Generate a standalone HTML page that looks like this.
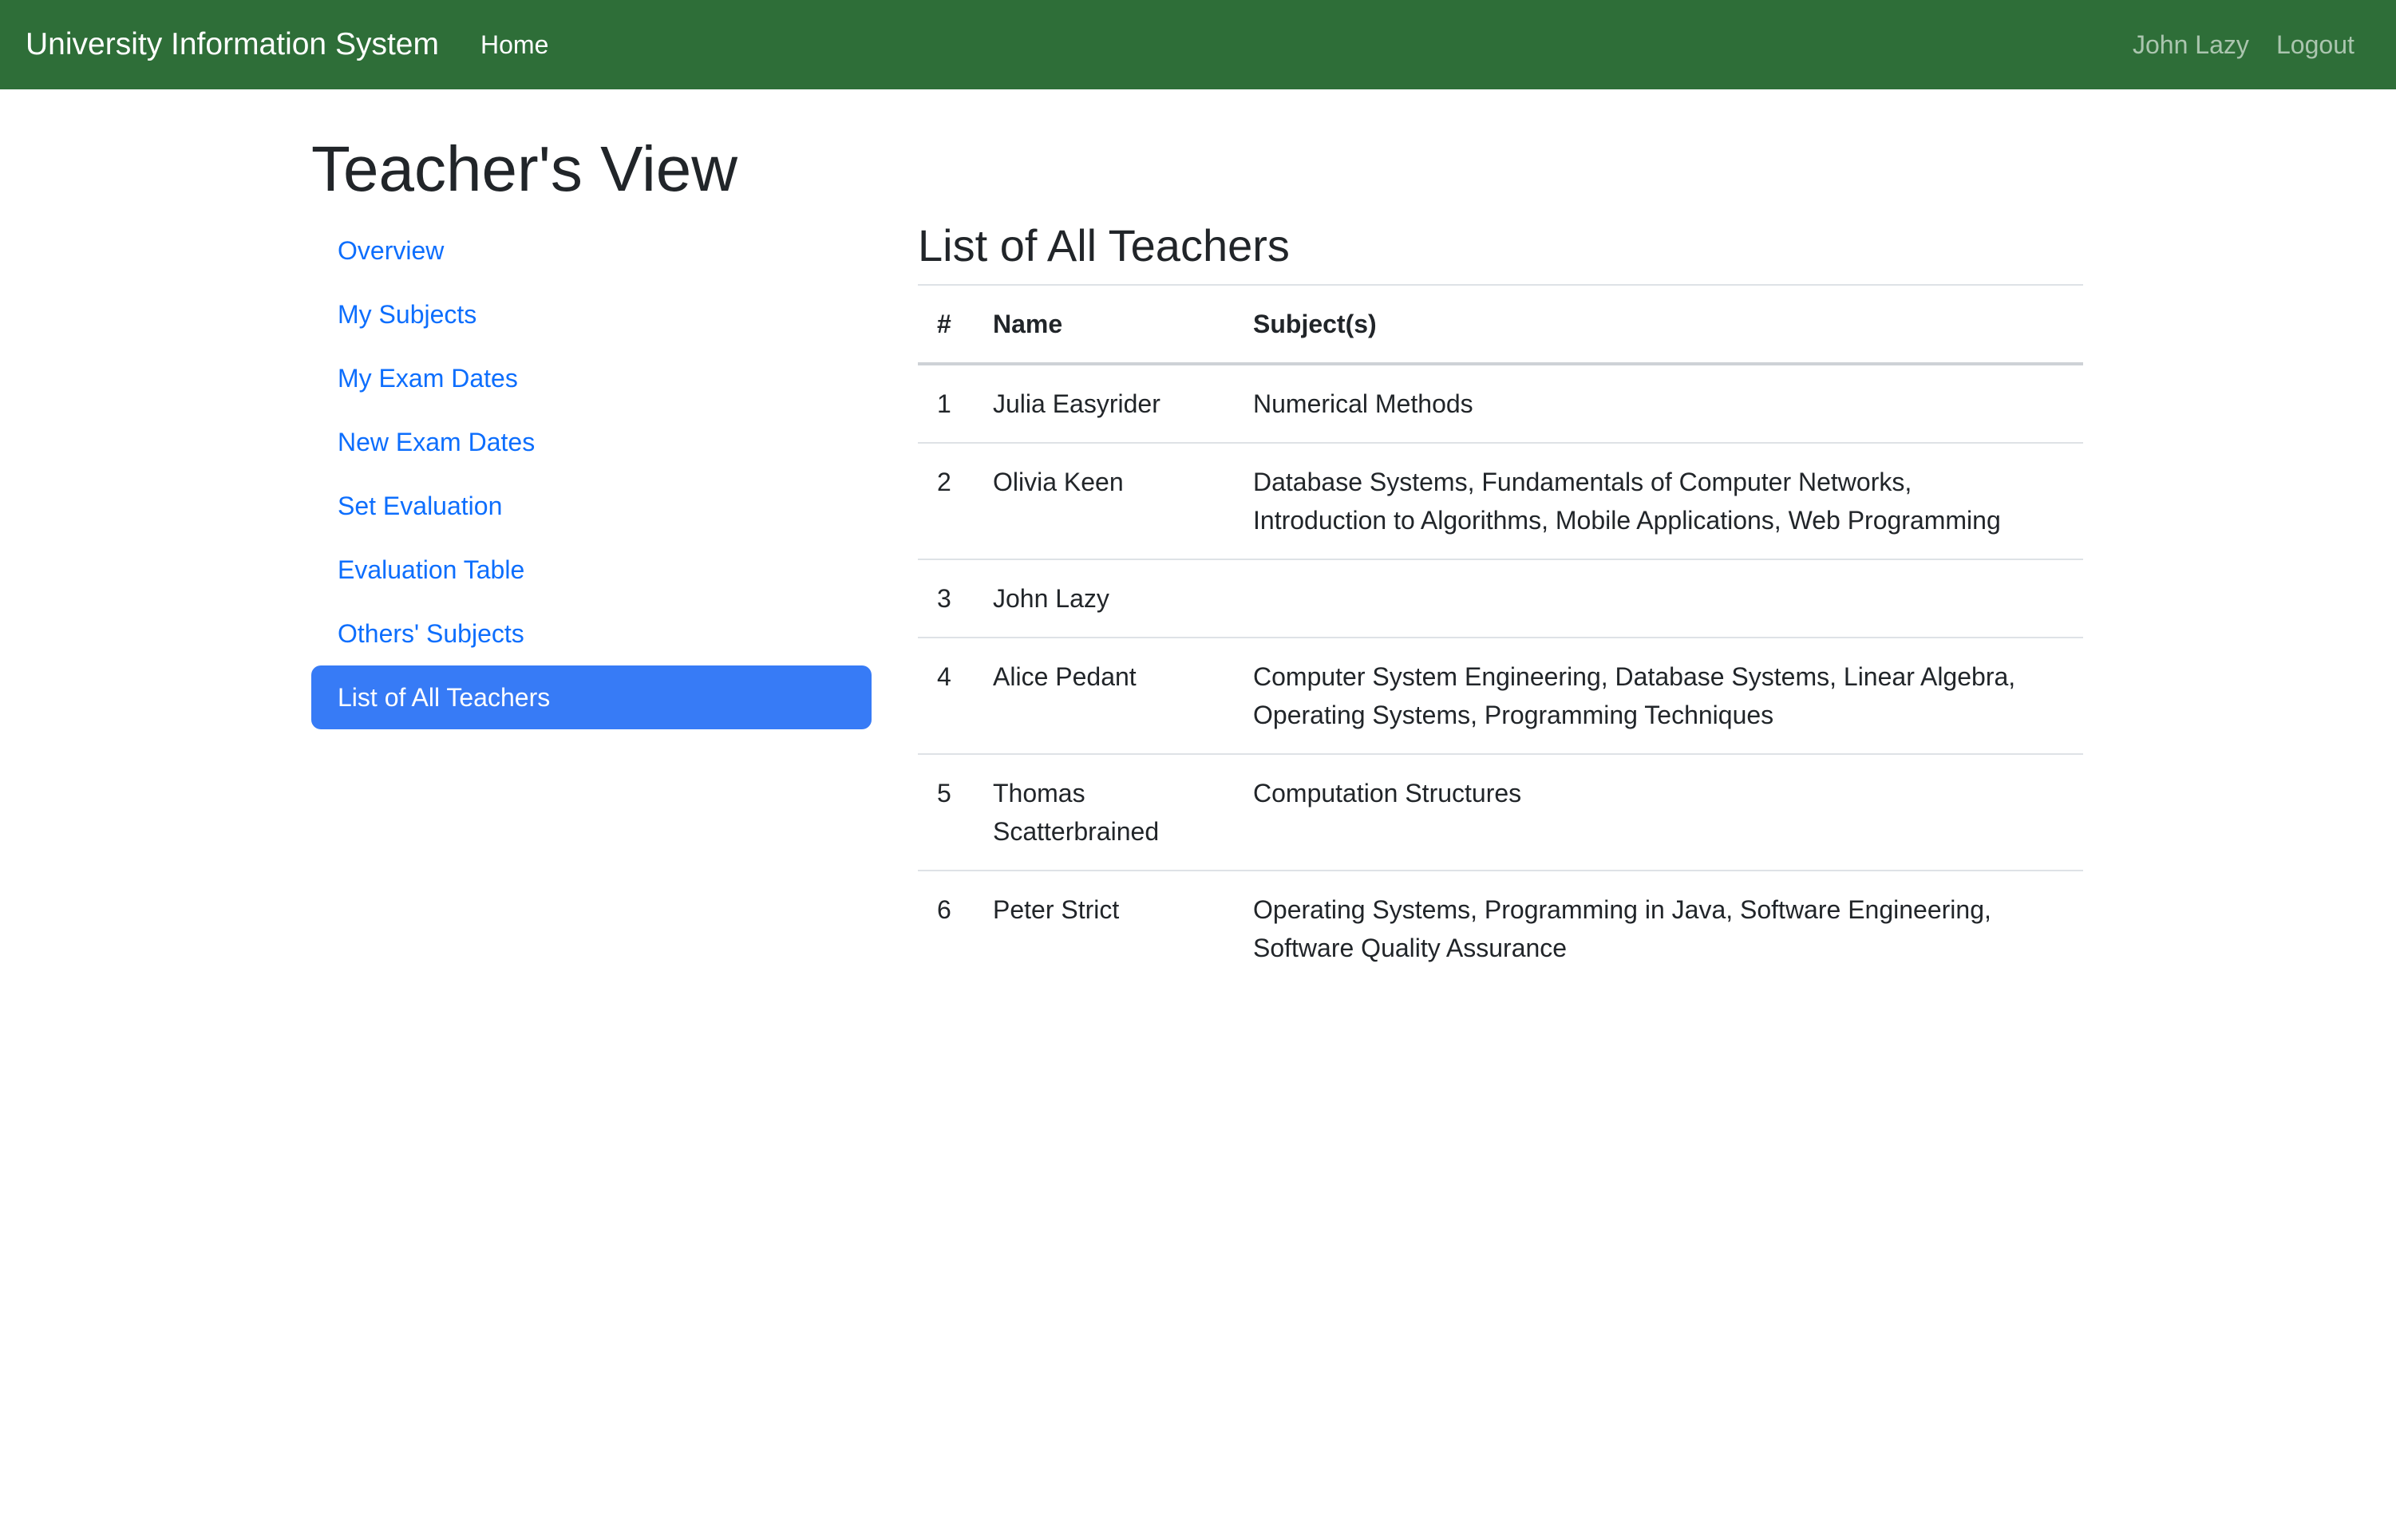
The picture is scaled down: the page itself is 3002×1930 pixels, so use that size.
<!DOCTYPE html>
<html><head><meta charset="utf-8"><style>
html{zoom:2}
body{margin:0;width:1501px;height:965px;background:#fff;font-family:"Liberation Sans",sans-serif;font-size:16px;color:#212529;position:relative;overflow:hidden}
.nav{position:absolute;left:0;top:0;width:1501px;height:56px;background:#2e6e38}
.nav span{position:absolute;top:0;line-height:56px;white-space:nowrap}
a{color:#0d6efd;text-decoration:none}
.abs{position:absolute;white-space:nowrap}
.side{position:absolute;left:195px;top:137px;width:351px}
.side div{height:40px;line-height:40px;padding-left:16.5px;color:#0d6efd;border-radius:6px}
.side div.act{background:#377bf6;color:#fff}
table{position:absolute;left:575px;top:178px;width:730px;border-collapse:collapse;border-top:1px solid #dee2e6}
td,th{padding:12px 0 12px 12px;line-height:24px;text-align:left;vertical-align:top;white-space:nowrap;border-bottom:1px solid #dee2e6}
th{font-weight:bold;border-bottom:2px solid #ced2d6}
</style></head><body>
<div class="nav">
<span style="left:16px;font-size:19.5px;color:#fff">University Information System</span>
<span style="left:301px;color:#fff">Home</span>
<span style="left:1336px;color:rgba(255,255,255,.6)">John Lazy</span>
<span style="left:1426px;color:rgba(255,255,255,.6)">Logout</span>
</div>
<div class="abs" style="left:195px;top:81px;font-size:40px;line-height:50px;font-weight:500">Teacher's View</div>
<div class="side">
<div>Overview</div><div>My Subjects</div><div>My Exam Dates</div><div>New Exam Dates</div><div>Set Evaluation</div><div>Evaluation Table</div><div>Others' Subjects</div><div class="act">List of All Teachers</div>
</div>
<div class="abs" style="left:575px;top:137px;font-size:28px;line-height:34px">List of All Teachers</div>
<table>
<colgroup><col style="width:35px"><col style="width:163px"><col></colgroup>
<tr><th>#</th><th>Name</th><th>Subject(s)</th></tr>
<tr><td>1</td><td>Julia Easyrider</td><td>Numerical Methods</td></tr>
<tr><td>2</td><td>Olivia Keen</td><td>Database Systems, Fundamentals of Computer Networks,<br>Introduction to Algorithms, Mobile Applications, Web Programming</td></tr>
<tr><td>3</td><td>John Lazy</td><td></td></tr>
<tr><td>4</td><td>Alice Pedant</td><td>Computer System Engineering, Database Systems, Linear Algebra,<br>Operating Systems, Programming Techniques</td></tr>
<tr><td>5</td><td>Thomas<br>Scatterbrained</td><td>Computation Structures</td></tr>
<tr><td style="border:0">6</td><td style="border:0">Peter Strict</td><td style="border:0">Operating Systems, Programming in Java, Software Engineering,<br>Software Quality Assurance</td></tr>
</table>
</body></html>
